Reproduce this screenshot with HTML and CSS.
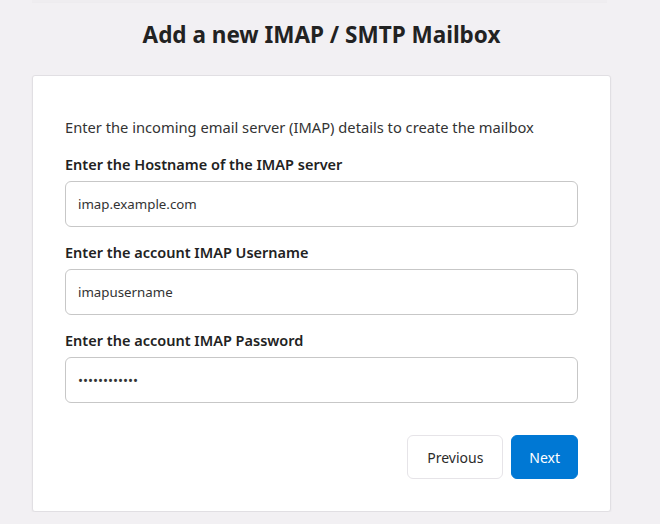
FILE: index.html
```html
<!DOCTYPE html>
<html>
<head>
<meta charset="utf-8">
<link rel="stylesheet" href="styles.css">
</head>
<body>
<div class="page">
  <div class="topbar"></div>
  <h1 class="title">Add a new IMAP / SMTP Mailbox</h1>
  <div class="card">
    <p class="desc">Enter the incoming email server (IMAP) details to create the mailbox</p>
    <label class="label">Enter the Hostname of the IMAP server</label>
    <input class="field" type="text" value="imap.example.com">
    <label class="label">Enter the account IMAP Username</label>
    <input class="field" type="text" value="imapusername">
    <label class="label">Enter the account IMAP Password</label>
    <input class="field" type="password" value="passwordxxxx">
    <div class="actions">
      <button class="btn btn-secondary">Previous</button>
      <button class="btn btn-primary">Next</button>
    </div>
  </div>
</div>
</body>
</html>
```

FILE: styles.css
```css
html, body {
  margin: 0;
  padding: 0;
  background: #f2f0f3;
  font-family: "Noto Sans", "Open Sans", sans-serif;
  color: #2b2b2b;
}
.page {
  width: 579px;
  margin-left: 32px;
}
.topbar {
  height: 2px;
  width: 575px;
  background: #efedf0;
  box-shadow: 0 1px 1px rgba(0,0,0,0.02);
}
.title {
  margin: 0;
  padding-top: 18px;
  height: 55px;
  line-height: 30px;
  text-align: center;
  font-size: 22.5px;
  font-weight: 700;
  color: #222;
}
.card {
  background: #fff;
  border: 1px solid #e1dfe3;
  border-radius: 3px;
  box-shadow: 0 1px 2px rgba(0,0,0,0.05);
  padding: 41px 32px 32px;
  display: flex;
  flex-direction: column;
}
.desc {
  margin: 0 0 17px;
  font-size: 14.7px;
  line-height: 20px;
  color: #333;
}
.label {
  display: block;
  font-size: 14.5px;
  line-height: 20px;
  font-weight: 600;
  color: #222;
  margin-bottom: 7px;
}
.field {
  box-sizing: border-box;
  height: 46px;
  width: 100%;
  margin: 0 0 15px;
  padding: 0 12px;
  border: 1px solid #c7c7c7;
  border-radius: 6px;
  font-family: inherit;
  font-size: 13.3px;
  color: #333;
  background: #fff;
  outline: none;
}
.field:last-of-type {
  margin-bottom: 0;
}
.actions {
  display: flex;
  justify-content: flex-end;
  gap: 8px;
  margin-top: 32px;
}
.btn {
  box-sizing: border-box;
  height: 44px;
  padding: 0 19px;
  border-radius: 6px;
  font-family: inherit;
  font-size: 14px;
  cursor: pointer;
}
.btn-secondary {
  background: #fff;
  border: 1px solid #e6e4e8;
  color: #2b2b2b;
  width: 96px;
  padding: 0;
}
.btn-primary {
  background: #0078d4;
  border: 1px solid #0078d4;
  color: #fff;
  padding: 0 17px;
}
```
